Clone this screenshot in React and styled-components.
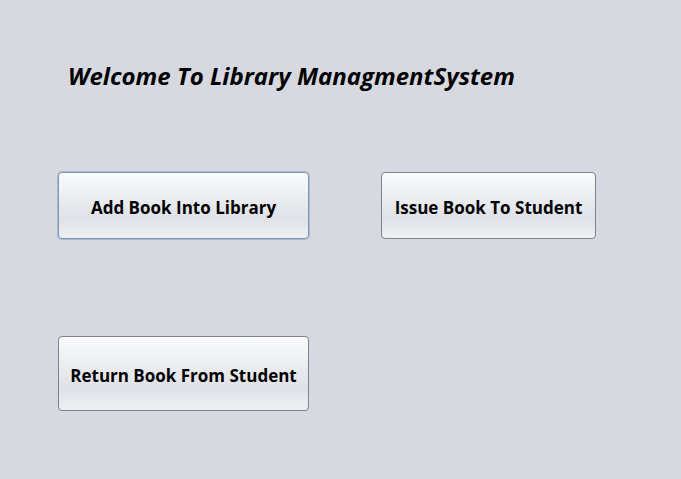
import React from "react";
import styled, { createGlobalStyle } from "styled-components";

const GlobalStyle = createGlobalStyle`
  html, body {
    margin: 0;
    padding: 0;
    background: #d6d9df;
  }
`;

const Frame = styled.div`
  width: 681px;
  height: 479px;
  background: #d6d9df;
  box-sizing: border-box;
  padding: 60px 0 0 58px;
  font-family: "Open Sans", "Noto Sans", sans-serif;
`;

const Title = styled.h1`
  margin: 0 0 0 10px;
  font-size: 24px;
  font-weight: 700;
  font-style: italic;
  color: #000;
  line-height: 32px;
`;

const Grid = styled.div`
  margin-top: 80px;
  display: grid;
  grid-template-columns: 251px 215px;
  grid-template-rows: 67px 75px;
  column-gap: 72px;
  row-gap: 97px;
  align-items: start;
`;

const Button = styled.button`
  height: ${(props) => props.h || 67}px;
  box-sizing: border-box;
  border: 1px solid ${(props) => (props.focused ? "#7f97b6" : "#7e828a")};
  box-shadow: ${(props) => (props.focused ? "0 0 0 1px #a9b9cf" : "none")};
  border-radius: 4px;
  background: linear-gradient(
    to bottom,
    #fbfbfc 0%,
    #eceef1 35%,
    #dfe1e6 70%,
    #eef0f3 100%
  );
  font-family: "Open Sans", "Noto Sans", sans-serif;
  font-size: 17px;
  font-weight: 700;
  color: #000;
  padding: 3px 0 0;
  cursor: pointer;
`;

function App() {
  return (
    <>
      <GlobalStyle />
      <Frame>
        <Title>Welcome To Library ManagmentSystem</Title>
        <Grid>
          <Button focused>Add Book Into Library</Button>
          <Button>Issue Book To Student</Button>
          <Button h={75}>Return Book From Student</Button>
        </Grid>
      </Frame>
    </>
  );
}

export default App;
